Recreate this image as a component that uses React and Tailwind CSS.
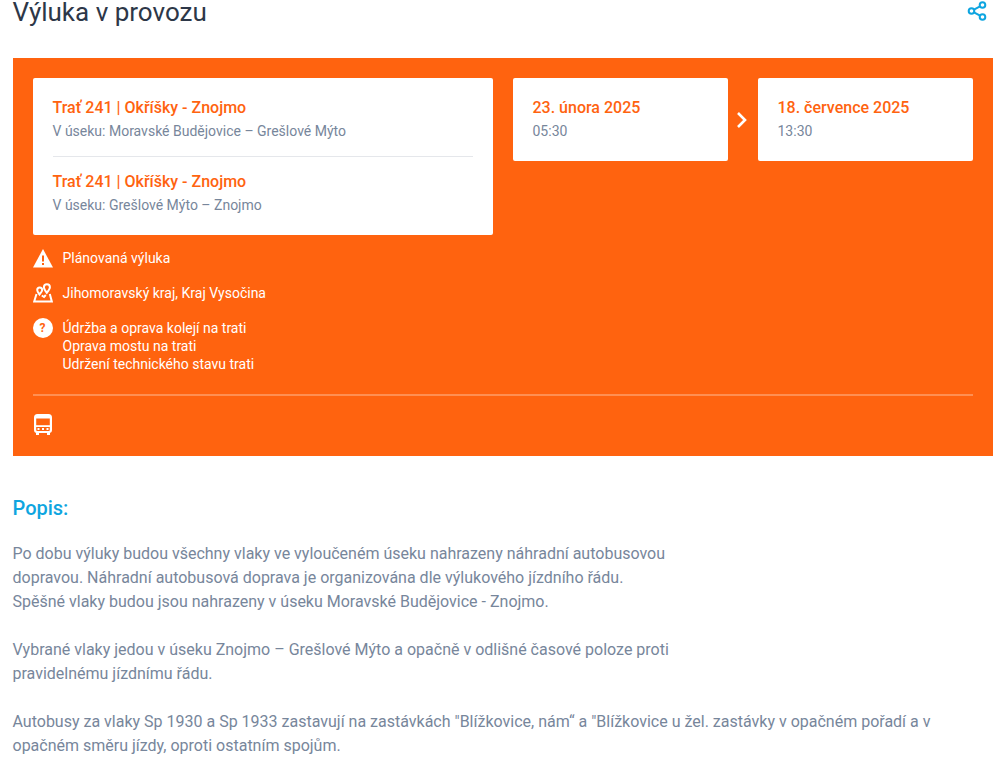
const trips = [
  { title: "Trať 241 | Okříšky - Znojmo", section: "V úseku: Moravské Budějovice – Grešlové Mýto" },
  { title: "Trať 241 | Okříšky - Znojmo", section: "V úseku: Grešlové Mýto – Znojmo" },
];

function DateCard({ date, time }) {
  return (
    <div className="w-[215px] h-[83px] bg-white rounded-[2px] px-5 pt-[19px]">
      <div className="text-[16px] leading-[21px] font-medium text-[#ff630f]">{date}</div>
      <div className="mt-[3px] text-[14px] leading-[21px] text-[#77869b]">{time}</div>
    </div>
  );
}

function InfoRow({ icon, children }) {
  return (
    <div className="flex gap-[10px]">
      <div className="w-5 h-[18px] flex items-center justify-center shrink-0">{icon}</div>
      <div className="text-[14px] leading-[18px] text-white">{children}</div>
    </div>
  );
}

export default function App() {
  return (
    <div className="w-[1003px] h-[762px] overflow-hidden bg-white px-[12.5px] font-['Roboto',sans-serif]">
      {/* Header */}
      <div className="flex justify-between pr-[4px] h-[58px]">
        <h1 className="text-[26px] leading-[24px] text-[#2d3748]">Výluka v provozu</h1>
        <svg className="w-5 h-5 mt-[1px]" viewBox="0 0 20 20" fill="none" stroke="#0ea5e0" strokeWidth="2">
          <circle cx="15.5" cy="4" r="2.8" />
          <circle cx="4.5" cy="10" r="2.8" />
          <circle cx="15.5" cy="16" r="2.8" />
          <path d="M7 8.600 13 5.400M7 11.400l6 3.200" />
        </svg>
      </div>

      {/* Orange panel */}
      <div className="w-[980px] h-[398px] bg-[#ff630f] p-5">
        <div className="flex items-start">
          <div className="w-[460px] h-[157px] bg-white rounded-[2px] px-5 pt-[19px]">
            {trips.map((t, i) => (
              <div key={i} className={i > 0 ? "mt-[14px] pt-[14px] border-t border-[#e5e7eb]" : ""}>
                <div className="text-[16px] leading-[21px] font-medium text-[#ff630f]">{t.title}</div>
                <div className="mt-[3px] text-[14px] leading-[21px] text-[#77869b]">{t.section}</div>
              </div>
            ))}
          </div>
          <div className="ml-5">
            <DateCard date="23. února 2025" time="05:30" />
          </div>
          <div className="w-[30px] h-[83px] pr-[2px] flex items-center justify-center">
            <svg className="w-[14px] h-[20px]" viewBox="0 0 14 20" fill="none" stroke="#fff" strokeWidth="2.600">
              <path d="M3 3l7 7-7 7" />
            </svg>
          </div>
          <DateCard date="18. července 2025" time="13:30" />
        </div>

        <div className="mt-[14px] flex flex-col gap-[17px]">
          <InfoRow
            icon={
              <svg className="w-5 h-[19px] shrink-0" viewBox="0 0 20 19">
                <path d="M10 0 20 18.500H0Z" fill="#fff" />
                <path d="M9 6.500h2v6H9zM9 14h2v2H9z" fill="#ff630f" />
              </svg>
            }
          >
            Plánovaná výluka
          </InfoRow>
          <InfoRow
            icon={
              <svg className="w-5 h-5 shrink-0" viewBox="0 0 20 20" fill="none" stroke="#fff" strokeWidth="2">
                <path d="M6.500 11.500C5 9.300 4.200 8.200 4.200 6.900a2.500 2.500 0 0 1 5 0c0 1.300-1.100 2.500-2.700 4.600Z" />
                <path d="M13.800 9.800C11.900 7.400 10.900 6 10.900 4.300a3 3 0 0 1 6 0c0 1.700-1.100 3.100-3.100 5.500Z" />
                <path d="M3.500 11 1.200 18.500h17.600L16.800 11M8.800 12.500l2.200 1.500 1.800-2" />
              </svg>
            }
          >
            Jihomoravský kraj, Kraj Vysočina
          </InfoRow>
          <InfoRow
            icon={
              <div className="w-5 h-5 shrink-0 rounded-full bg-white flex items-center justify-center text-[12px] leading-none font-bold text-[#ff630f]">
                ?
              </div>
            }
          >
            Údržba a oprava kolejí na trati
            <br />
            Oprava mostu na trati
            <br />
            Udržení technického stavu trati
          </InfoRow>
        </div>

        <div className="mt-[21px] h-[2px] bg-[#ff8f52]" />

        {/* Bus */}
        <svg className="mt-[18px] w-5 h-[21px]" viewBox="0 0 20 21" fill="none">
          <path d="M4.500 0h11A3.500 3.500 0 0 1 19 3.500V16a3 3 0 0 1-3 3H4a3 3 0 0 1-3-3V3.500A3.500 3.500 0 0 1 4.500 0Z" fill="#fff" />
          <path d="M3.200 4.500h13.600v6.700H3.200z" fill="#ff630f" />
          <path d="M3.200 13h13.600v3a1 1 0 0 1-1 1H4.200a1 1 0 0 1-1-1z" fill="#ff630f" />
          <path d="M3 18h3v3H3zM14 18h3v3h-3z" fill="#fff" />
          <path d="M4.500 15h2M9 15h2M13.500 15h2" stroke="#fff" strokeWidth="1.800" />
        </svg>
      </div>

      {/* Description */}
      <div className="pt-[39px]">
        <h2 className="text-[20px] leading-[26px] font-medium text-[#0ea5e0]">Popis:</h2>
        <div className="mt-[21px] text-[16px] leading-[24px] text-[#77869b]">
          <p>
            Po dobu výluky budou všechny vlaky ve vyloučeném úseku nahrazeny náhradní autobusovou
            <br />
            dopravou. Náhradní autobusová doprava je organizována dle výlukového jízdního řádu.
            <br />
            Spěšné vlaky budou jsou nahrazeny v úseku Moravské Budějovice - Znojmo.
          </p>
          <p className="mt-6">
            Vybrané vlaky jedou v úseku Znojmo – Grešlové Mýto a opačně v odlišné časové poloze proti
            <br />
            pravidelnému jízdnímu řádu.
          </p>
          <p className="mt-6">
            Autobusy za vlaky Sp 1930 a Sp 1933 zastavují na zastávkách "Blížkovice, nám“ a "Blížkovice u žel. zastávky v opačném pořadí a v
            <br />
            opačném směru jízdy, oproti ostatním spojům.
          </p>
        </div>
      </div>
    </div>
  );
}
